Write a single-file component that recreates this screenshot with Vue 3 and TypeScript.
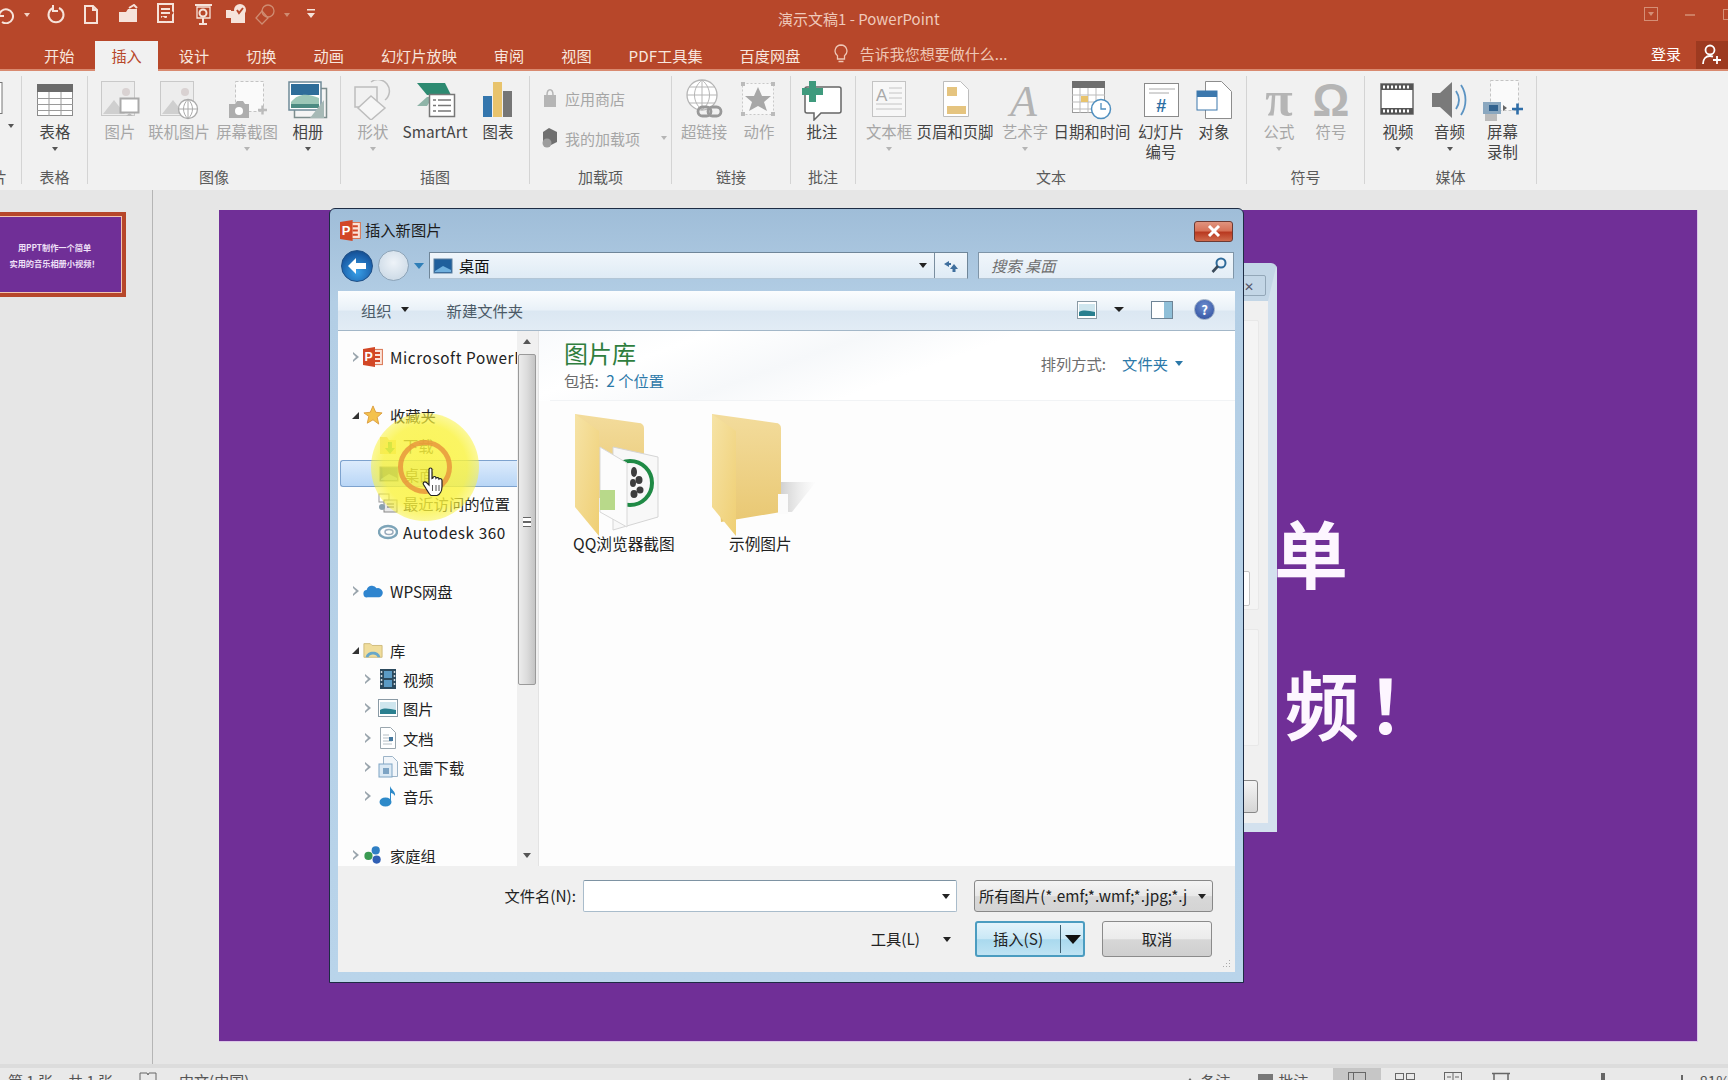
<script setup lang="ts">
const svg = (w: number, h: number, inner: string) =>
  `<svg xmlns="http://www.w3.org/2000/svg" width="${w}" height="${h}" viewBox="0 0 ${w} ${h}" style="display:block">${inner}</svg>`

// quick access toolbar
const q = 'fill="none" stroke="#f6e3da" stroke-width="2"'
const qat = [
  { w: 21, html: svg(20, 20, `<path d="M4 6v6h6M5 12a7 7 0 1 1 3 6" ${q}/>`) },
  { w: 25, html: svg(10, 20, `<path d="M2 9h6l-3 4z" fill="#f3d3c5"/>`) },
  { w: 33, html: svg(20, 20, `<path d="M7 4a7.5 7.5 0 1 0 6 0" ${q} stroke-width="3"/><path d="M7 1v6h5" ${q}/>`) },
  { w: 37, html: svg(20, 20, `<path d="M4 2h8l4 4v13H4zM12 2v4h4" ${q} stroke-width="1.5"/>`) },
  { w: 38, html: svg(22, 20, `<path d="M2 8h7l2-3h9v13H2z" fill="#f6e3da"/><path d="M12 4l5-3 3 3" ${q} stroke-width="1.5"/>`) },
  { w: 38, html: svg(20, 22, `<rect x="2" y="1" width="15" height="18" ${q} stroke-width="1.5"/><path d="M5 6h9M5 10h9M5 14h6" ${q} stroke-width="1.5"/><path d="M6 14l4 3 7-8" stroke="#b7472a" stroke-width="2" fill="none"/>`) },
  { w: 36, html: svg(22, 24, `<rect x="3" y="2" width="17" height="2" fill="#f6e3da"/><path d="M5 5h13v11H5z" fill="none" stroke="#f6e3da" stroke-width="1.3"/><circle cx="11" cy="11" r="3.5" ${q} stroke-width="1.5"/><path d="M11 16v5M7 22h8" ${q}/>`) },
  { w: 32, html: svg(24, 22, `<rect x="6" y="8" width="14" height="12" fill="#f6e3da"/><rect x="1" y="7" width="5" height="8" fill="#f6e3da"/><circle cx="15" cy="7" r="6" fill="#f6e3da"/><path d="M12 7l2 3 4-5" stroke="#b7472a" stroke-width="2" fill="none"/>`) },
  { w: 23, html: svg(22, 22, `<circle cx="14" cy="8" r="6" fill="none" stroke="#cf8c72" stroke-width="1.3"/><path d="M8 8l6 7-6 6-6-6z" fill="none" stroke="#cf8c72" stroke-width="1.3"/>`) },
  { w: 22, html: svg(10, 20, `<path d="M2 9h6l-3 4z" fill="#cf8c72"/>`) },
  { w: 26, html: svg(10, 20, `<path d="M1 5h8v1.5H1zM1 9h8l-4 5z" fill="#f6e3da"/>`) },
]

const tabs = ['开始', '插入', '设计', '切换', '动画', '幻灯片放映', '审阅', '视图', 'PDF工具集', '百度网盘']

const icons: Record<string, string> = {
  table: svg(40, 40, `<rect x="2.5" y="4.5" width="35" height="31" fill="#fff" stroke="#8a8a8a"/><rect x="2" y="4" width="36" height="8" fill="#6b6b6b"/><path d="M2 18.5h36M2 24.5h36M2 30.5h36M14 12v24M26 12v24" stroke="#9a9a9a"/>`),
  picture: svg(40, 40, `<rect x="1.5" y="1.5" width="33" height="34" fill="#ededed" stroke="#c9c9c9"/><circle cx="26" cy="12" r="4" fill="#d9d2d2"/><path d="M3 34l11-14 11 14z" fill="#cfcfcf"/><rect x="20.5" y="18.5" width="18" height="14" fill="#fff" stroke="#aaa" stroke-width="2"/><path d="M26 36h7l-3.500-3z" fill="#bbb"/>`),
  online: svg(40, 40, `<rect x="1.500" y="1.500" width="33" height="34" fill="#ededed" stroke="#c9c9c9"/><circle cx="26" cy="12" r="4" fill="#d9d2d2"/><path d="M3 34l11-14 11 14z" fill="#cfcfcf"/><circle cx="29" cy="29" r="9.500" fill="#fff" stroke="#aaa" stroke-width="1.300"/><path d="M19.500 29h19M29 19.500v19M29 19.500c-6 5-6 14 0 19M29 19.500c6 5 6 14 0 19" fill="none" stroke="#aaa"/>`),
  shot: svg(40, 40, `<rect x="8.500" y="1.500" width="28" height="30" fill="#fafafa" stroke="#c4c4c4" stroke-dasharray="3 2"/><path d="M2 24h6l2-3h6l2 3h4v14H2z" fill="#aeaeae"/><circle cx="12" cy="31" r="4" fill="#fff"/><path d="M31 30h9M35.500 25.500v9" stroke="#bbb" stroke-width="2.400"/>`),
  album: svg(40, 40, `<rect x="6.500" y="8.500" width="32" height="29" fill="#f4f4f4" stroke="#7d8d8d" stroke-width="1.500"/><rect x="1" y="2" width="32" height="28" fill="#fff" stroke="#6f8a98" stroke-width="1.500"/><path d="M3 4h28v11H3z" fill="#2e6d99"/><path d="M3 22c8-10 18-8 28-4v6H3z" fill="#9cc7b7"/><path d="M3 24h28v4H3z" fill="#4c8b82"/><path d="M22 38l14-18v18z" fill="#a6b9b6"/>`),
  shapes: svg(40, 40, `<rect x="2" y="7" width="22" height="20" fill="none" stroke="#bdbdbd" stroke-width="1.500"/><path d="M18 2a11 11 0 0 1 14 18" fill="none" stroke="#bdbdbd" stroke-width="1.500"/><path d="M18 16l14 12-14 12-13-12z" fill="#f6f6f6" stroke="#bdbdbd" stroke-width="1.500"/>`),
  smartart: svg(44, 40, `<path d="M4 3h28l6 12H14z" fill="#2d8a71"/><path d="M14 17h6l-6 9H4z" fill="#8fb4a8"/><rect x="16.500" y="14.500" width="25" height="22" fill="#fff" stroke="#777" stroke-width="1.500"/><path d="M25 20h13M25 25.500h13M25 31h13M20 20h3M20 25.500h3M20 31h3" stroke="#777" stroke-width="1.300"/>`),
  chart: svg(40, 40, `<rect x="5" y="16" width="9" height="21" fill="#3476ad"/><rect x="15" y="2" width="9" height="35" fill="#e8c36c"/><rect x="25" y="11" width="9" height="26" fill="#767676"/>`),
  store: svg(16, 20, `<path d="M2 7h12v12H2z" fill="#b5b5b5"/><path d="M5 7c0-7 6-7 6 0" fill="none" stroke="#b5b5b5" stroke-width="1.500"/>`),
  addin: svg(16, 22, `<path d="M7 1l8 4v10l-8 4-6-3V5z" fill="#6f6f6f"/><circle cx="5" cy="16" r="4.500" fill="#9d9d9d"/>`),
  link: svg(44, 44, `<circle cx="20" cy="17" r="15" fill="#fff" stroke="#b5b5b5" stroke-width="1.300"/><path d="M5 17h30M7 9h26M7 25h26M20 2v30M20 2c-10 8-10 22 0 30M20 2c10 8 10 22 0 30" fill="none" stroke="#b5b5b5"/><rect x="16" y="29" width="13" height="9" rx="4.500" fill="none" stroke="#999" stroke-width="2.800"/><rect x="26" y="29" width="13" height="9" rx="4.500" fill="none" stroke="#999" stroke-width="2.800"/>`),
  action: svg(40, 40, `<rect x="3.500" y="3.500" width="31" height="31" fill="#f7f7f7" stroke="#c9c9c9" stroke-dasharray="2 2"/><path d="M19 7l4 9h9l-7 6 3 9-9-5-9 5 3-9-7-6h9z" fill="#a7a7a7"/><path d="M2 2h4v4H2zM32 2h4v4h-4zM2 32h4v4H2zM32 32h4v4h-4z" fill="#bbb"/>`),
  comment: svg(42, 42, `<path d="M6 8h32a2 2 0 0 1 2 2v22a2 2 0 0 1-2 2H20l-7 7v-7H6a2 2 0 0 1-2-2V10a2 2 0 0 1 2-2z" fill="#fff" stroke="#666" stroke-width="1.500"/><path d="M1 9h7V2h7v7h7v7h-7v7H8v-7H1z" fill="#3f9a7d"/>`),
  textbox: svg(40, 40, `<rect x="3.500" y="1.500" width="33" height="35" fill="#f7f7f7" stroke="#c4c4c4"/><text x="7" y="21" font-size="17" fill="#a9a9a9" font-family="Liberation Sans">A</text><path d="M20 8h13M20 13h13M20 18h13M7 24h26M7 29h26" stroke="#c4c4c4"/>`),
  header: svg(40, 40, `<path d="M8.500 1.500h17l8 8v27h-25z" fill="#fff" stroke="#bdbdbd"/><rect x="12" y="7" width="10" height="9" fill="#e5c47f"/><rect x="12" y="26" width="19" height="8" fill="#e5c47f"/>`),
  wordart: svg(40, 40, `<text x="5" y="36" font-size="44" font-style="italic" fill="#b3b3b3" font-family="Liberation Serif">A</text>`),
  date: svg(44, 42, `<rect x="2.500" y="2.500" width="32" height="31" fill="#fff" stroke="#9a9a9a"/><rect x="2" y="2" width="33" height="7" fill="#6e6e6e"/><path d="M2 16h33M2 23h33M2 30h33M10 9v25M18 9v25M26 9v25" stroke="#bbb"/><rect x="11" y="17" width="7" height="6" fill="#e8c36c"/><circle cx="31" cy="30" r="9.500" fill="#fff" stroke="#4f8fbf" stroke-width="1.500"/><path d="M31 24v6h5" fill="none" stroke="#4f8fbf" stroke-width="1.300"/>`),
  number: svg(40, 40, `<rect x="3.500" y="3.500" width="34" height="33" fill="#fff" stroke="#8a8a8a"/><path d="M8 9h26M8 13h20" stroke="#aaa"/><text x="15" y="32" font-size="18" font-weight="700" font-style="italic" fill="#2d6ea3" font-family="Liberation Sans">#</text>`),
  object: svg(40, 40, `<path d="M11.500 1.500h16l10 10v27h-26z" fill="#fff" stroke="#8d8d8d"/><rect x="3" y="11" width="20" height="19" fill="#fff" stroke="#3c78ad"/><rect x="3" y="11" width="20" height="6" fill="#3c78ad"/>`),
  pi: svg(40, 44, `<text x="20" y="38" text-anchor="middle" font-size="50" font-weight="700" fill="#b5b5b5" font-family="Liberation Serif">π</text>`),
  omega: svg(40, 44, `<text x="20" y="38" text-anchor="middle" font-size="46" font-weight="700" fill="#b5b5b5" font-family="Liberation Sans">Ω</text>`),
  video: svg(40, 40, `<rect x="3" y="4" width="32" height="30" fill="#fff" stroke="#666" stroke-width="1.500"/><rect x="3" y="4" width="32" height="6" fill="#555"/><rect x="3" y="28" width="32" height="6" fill="#555"/><path d="M6 5.500v3M10 5.500v3M14 5.500v3M18 5.500v3M22 5.500v3M26 5.500v3M30 5.500v3M6 29.500v3M10 29.500v3M14 29.500v3M18 29.500v3M22 29.500v3M26 29.500v3M30 29.500v3" stroke="#fff" stroke-width="2"/>`),
  audio: svg(40, 42, `<path d="M2 14h8l12-11v36L10 28H2z" fill="#7a7a7a"/><path d="M26 12c4 6 4 12 0 18M31 6c6 9 6 21 0 30" fill="none" stroke="#5b93c2" stroke-width="1.800"/>`),
  record: svg(44, 44, `<rect x="9.500" y="2.500" width="28" height="30" fill="#fafafa" stroke="#c4c4c4" stroke-dasharray="3 2"/><rect x="2" y="24" width="18" height="12" fill="#8aa7bf"/><rect x="4" y="36" width="12" height="7" fill="#bbb"/><rect x="8" y="27" width="9" height="6" fill="#33638f"/><path d="M22 27l4 3-4 3z" fill="#666"/><path d="M31 31h11M36.500 25.500v11" stroke="#2f6ea8" stroke-width="2.600"/>`),
}

interface RibbonItem { label: string; icon: string; w: number; off?: boolean; arrow?: boolean }
interface RibbonGroup { label: string; w: number; pad: number; items: RibbonItem[] }

const groups: RibbonGroup[] = [
  { label: '表格', w: 66, pad: 8, items: [{ label: '表格', icon: 'table', w: 50, arrow: true }] },
  { label: '图像', w: 253, pad: 4, items: [
    { label: '图片', icon: 'picture', w: 56, off: true },
    { label: '联机图片', icon: 'online', w: 62, off: true },
    { label: '屏幕截图', icon: 'shot', w: 74, off: true, arrow: true },
    { label: '相册', icon: 'album', w: 48, arrow: true },
  ] },
  { label: '插图', w: 189, pad: 8, items: [
    { label: '形状', icon: 'shapes', w: 48, off: true, arrow: true },
    { label: 'SmartArt', icon: 'smartart', w: 76 },
    { label: '图表', icon: 'chart', w: 50 },
  ] },
  { label: '加载项', w: 142, pad: 0, items: [] },
  { label: '链接', w: 119, pad: 5, items: [
    { label: '超链接', icon: 'link', w: 54, off: true },
    { label: '动作', icon: 'action', w: 56, off: true },
  ] },
  { label: '批注', w: 65, pad: 6, items: [{ label: '批注', icon: 'comment', w: 50 }] },
  { label: '文本', w: 391, pad: 3, items: [
    { label: '文本框', icon: 'textbox', w: 60, off: true, arrow: true },
    { label: '页眉和页脚', icon: 'header', w: 72 },
    { label: '艺术字', icon: 'wordart', w: 68, off: true, arrow: true },
    { label: '日期和时间', icon: 'date', w: 66 },
    { label: '幻灯片\n编号', icon: 'number', w: 72 },
    { label: '对象', icon: 'object', w: 34 },
  ] },
  { label: '符号', w: 118, pad: 7, items: [
    { label: '公式', icon: 'pi', w: 50, off: true, arrow: true },
    { label: '符号', icon: 'omega', w: 54, off: true },
  ] },
  { label: '媒体', w: 172, pad: 8, items: [
    { label: '视频', icon: 'video', w: 50, arrow: true },
    { label: '音频', icon: 'audio', w: 53, arrow: true },
    { label: '屏幕\n录制', icon: 'record', w: 53 },
  ] },
]

const p3 = (s: number) => svg(s, s, `<rect x="${s * 0.45}" y="${s * 0.12}" width="${s * 0.52}" height="${s * 0.76}" fill="#fbe3d8" stroke="#d9734f"/><path d="M${s * 0.6} ${s * 0.3}h${s * 0.25}M${s * 0.6} ${s * 0.5}h${s * 0.25}M${s * 0.6} ${s * 0.7}h${s * 0.25}" stroke="#d24726" stroke-width="2"/><path d="M0 ${s * 0.1}L${s * 0.6} 0V${s}L0 ${s * 0.9}z" fill="#d24726"/><text x="${s * 0.08}" y="${s * 0.72}" font-size="${s * 0.62}" font-weight="700" fill="#fff" font-family="Liberation Sans">P</text>`)

const tree: Record<string, string> = {
  p3: p3(20),
  star: svg(22, 22, `<path d="M11 1l3 7 7 .7-5.400 4.800 1.700 7.500L11 16.300 4.700 20l1.700-7.500L1 8.700 8 8z" fill="#f4c24d" stroke="#d99b3a"/>`),
  download: svg(20, 22, `<path d="M2 3h7l2 3h7v14H2z" fill="#f0dc8c"/><path d="M10 8h4v6h3l-5 6-5-6h3z" fill="#4fae5f"/>`),
  desktop: svg(20, 20, `<rect x="1" y="3" width="18" height="14" fill="#1f5f9c" stroke="#5a7f9e"/><path d="M2 15l8-5 8 4v2H2z" fill="#6fb0de"/>`),
  recent: svg(20, 22, `<rect x="1" y="2" width="10" height="8" fill="#fff" stroke="#999"/><rect x="6" y="8" width="13" height="12" fill="#e8e8e8" stroke="#888"/><path d="M9 12h7M9 15h7" stroke="#666"/><circle cx="4" cy="15" r="3" fill="#8ba0ad"/>`),
  autodesk: svg(20, 18, `<ellipse cx="10" cy="9" rx="9" ry="6" fill="none" stroke="#7da4b8" stroke-width="2.400"/><ellipse cx="11" cy="9" rx="4" ry="2.500" fill="none" stroke="#9ab" stroke-width="1.500"/>`),
  cloud: svg(22, 18, `<path d="M5 16a4 4 0 0 1-1-8 6 6 0 0 1 11-2 5 5 0 0 1 3 10z" fill="#2f85cf"/>`),
  lib: svg(22, 20, `<path d="M1 3h7l2 2h11v13H1z" fill="#f0dd9c" stroke="#cdb877"/><path d="M3 18c1-8 15-8 16 0h-3c-1-4-9-4-10 0z" fill="#68a7c9"/>`),
  film: svg(18, 22, `<rect x="1" y="1" width="16" height="20" fill="#2c4a5e"/><rect x="5" y="3" width="8" height="7" fill="#5b9bc5"/><rect x="5" y="12" width="8" height="7" fill="#5b9bc5"/><path d="M2.500 3v16M15.500 3v16" stroke="#cfd8dd" stroke-dasharray="2 2" stroke-width="1.500"/>`),
  pic: svg(20, 18, `<rect x=".5" y=".5" width="19" height="17" fill="#fff" stroke="#8a9aa5"/><rect x="2" y="3" width="16" height="12" fill="#cfe6ee"/><path d="M2 11c5-3 10-1 16 0v4H2z" fill="#2a7f8f"/>`),
  doc: svg(16, 22, `<path d="M.5.5h10l5 5v16H.5z" fill="#fff" stroke="#9aa6ae"/><path d="M3 8h6M3 11h6M3 14h9M3 17h9" stroke="#b5bec4"/><rect x="9" y="10" width="4" height="4" fill="#44779e"/>`),
  xl: svg(20, 22, `<path d="M5.500.5h9l5 5v15h-14z" fill="#f2f6fa" stroke="#9db4c8"/><rect x="1" y="8" width="13" height="13" fill="#dbe9f4" stroke="#7ea4c4"/><rect x="5" y="12" width="6" height="6" fill="#7ea4c4"/>`),
  music: svg(18, 22, `<ellipse cx="6.500" cy="17" rx="6" ry="4.500" fill="#2e8ac9"/><path d="M11 17V1c1 4 6 5 5 10-1-2-3-3-4-3v9z" fill="#2e8ac9"/>`),
  home: svg(22, 20, `<circle cx="14" cy="5" r="4.500" fill="#2f7fc4"/><circle cx="6" cy="11" r="4.500" fill="#3a9a52"/><circle cx="15" cy="15" r="4.500" fill="#2f5fb4"/>`),
}

interface TreeRow { label?: string; icon?: string; level?: number; exp?: 'open' | 'closed'; sel?: boolean; latin?: boolean }
const rows: TreeRow[] = [
  { label: 'Microsoft PowerPoint', icon: 'p3', level: 0, exp: 'closed', latin: true },
  {},
  { label: '收藏夹', icon: 'star', level: 0, exp: 'open' },
  { label: '下载', icon: 'download', level: 1 },
  { label: '桌面', icon: 'desktop', level: 1, sel: true },
  { label: '最近访问的位置', icon: 'recent', level: 1 },
  { label: 'Autodesk 360', icon: 'autodesk', level: 1, latin: true },
  {},
  { label: 'WPS网盘', icon: 'cloud', level: 0, exp: 'closed' },
  {},
  { label: '库', icon: 'lib', level: 0, exp: 'open' },
  { label: '视频', icon: 'film', level: 1, exp: 'closed' },
  { label: '图片', icon: 'pic', level: 1, exp: 'closed' },
  { label: '文档', icon: 'doc', level: 1, exp: 'closed' },
  { label: '迅雷下载', icon: 'xl', level: 1, exp: 'closed' },
  { label: '音乐', icon: 'music', level: 1, exp: 'closed' },
  {},
  { label: '家庭组', icon: 'home', level: 0, exp: 'closed' },
]

const folderDefs = `<defs><linearGradient id="fb" x1="0" y1="0" x2="0" y2="1"><stop offset="0" stop-color="#f3dc9c"/><stop offset="1" stop-color="#e9c873"/></linearGradient><linearGradient id="ff" x1="0" y1="0" x2="1" y2="1"><stop offset="0" stop-color="#f6e3a6"/><stop offset="1" stop-color="#efcf74"/></linearGradient><linearGradient id="fs" x1="0" y1="0" x2="1" y2="0"><stop offset="0" stop-color="#aaa" stop-opacity=".55"/><stop offset="1" stop-color="#ccc" stop-opacity="0"/></linearGradient></defs>`
const plant = '<g fill="#3d3d3d"><ellipse cx="61" cy="60" rx="3" ry="5"/><ellipse cx="66" cy="68" rx="3.500" ry="4"/><ellipse cx="60" cy="71" rx="3" ry="4"/><ellipse cx="67" cy="78" rx="3.500" ry="3.500"/><ellipse cx="61" cy="82" rx="3.500" ry="4"/></g>'
const folderQQ = svg(92, 126, `${folderDefs}<path d="M2 2l64 9a5 5 0 0 1 5 5v70H10z" fill="url(#fb)"/><path d="M40 35l45 10v60l-45 13z" fill="#f8f8f8" stroke="#d5d5d5"/><circle cx="57" cy="71" r="22" fill="none" stroke="#1f8a45" stroke-width="4"/>${plant}<path d="M27 35l27 16v64l-27-15z" fill="#fcfcfc" stroke="#d8d8d8"/><rect x="27" y="78" width="15" height="20" fill="#b8d98a"/><path d="M2 2l24 17v105L2 95z" fill="url(#ff)"/>`)
const folderPlain = svg(108, 126, `${folderDefs}<path d="M70 70h36l-24 30H70z" fill="url(#fs)"/><path d="M2 2l64 9a5 5 0 0 1 5 5v84l-60 10z" fill="url(#fb)"/><rect x="68" y="82" width="10" height="20" fill="#fbfbfb"/><path d="M2 2l24 17v105L2 95z" fill="url(#ff)"/>`)

const vs = 'fill="none" stroke="#666"'
const views = [
  { id: 'normal', html: svg(18, 16, `<rect x=".5" y=".5" width="17" height="15" ${vs}/><path d="M5.500 1v14M5.500 11h12" ${vs}/>`) },
  { id: 'sorter', html: svg(20, 16, `<rect x=".5" y="1.500" width="8" height="6" ${vs}/><rect x="11.500" y="1.500" width="8" height="6" ${vs}/><rect x=".5" y="10.500" width="8" height="5" ${vs}/><rect x="11.500" y="10.500" width="8" height="5" ${vs}/>`) },
  { id: 'reading', html: svg(18, 16, `<rect x=".5" y=".5" width="17" height="15" ${vs}/><path d="M9 1v14M3 5h4M11 5h4M3 9h4M11 9h4" ${vs}/>`) },
  { id: 'show', html: svg(20, 16, `<path d="M1 1.500h18M3 2v10h14V2" ${vs} stroke-width="1.500"/>`) },
]
</script>

<template>
  <div class="app">
    <!-- title bar -->
    <div class="titlebar">
      <div class="qat">
        <span v-for="(b, i) in qat" :key="i" class="qat-cell" :style="{ width: b.w + 'px' }" v-html="b.html"></span>
      </div>
      <div class="doc-title">演示文稿1 - PowerPoint</div>
      <div class="win-btns">
        <svg width="16" height="16" viewBox="0 0 16 16"><rect x="1.500" y="1.500" width="13" height="13" fill="none" stroke="#d58f76"/><path d="M5 6h6l-3 4z" fill="#d58f76"/></svg>
        <svg width="16" height="16" viewBox="0 0 16 16"><path d="M3 9h10" stroke="#d58f76" stroke-width="1.500"/></svg>
        <svg width="16" height="16" viewBox="0 0 16 16"><rect x="2.500" y="3.500" width="11" height="10" fill="none" stroke="#d58f76"/></svg>
      </div>
    </div>

    <!-- tabs -->
    <div class="tabs">
      <span v-for="t in tabs" :key="t" class="tab" :class="{ active: t === '插入' }">{{ t }}</span>
      <span class="tell">
        <svg width="14" height="20" viewBox="0 0 14 20"><path d="M7 1a6 6 0 0 1 3.500 10.800V15h-7v-3.200A6 6 0 0 1 7 1zM4.500 17.500h5" fill="none" stroke="#eec6b5" stroke-width="1.300"/></svg>
        告诉我您想要做什么...
      </span>
      <span class="login">登录</span>
      <span class="account">
        <svg width="20" height="22" viewBox="0 0 20 22"><circle cx="8" cy="6" r="4.500" fill="none" stroke="#fff" stroke-width="1.800"/><path d="M1 20c0-5 3-8 7-8 1 0 2 .2 3 .6" fill="none" stroke="#fff" stroke-width="1.800"/><path d="M11 16h8M15 12v8" stroke="#fff" stroke-width="1.800"/></svg>
      </span>
    </div>

    <!-- ribbon -->
    <div class="ribbon">
      <div class="group first">
        <div class="first-icon">
          <svg width="6" height="32" viewBox="0 0 6 32"><rect x="-6" y=".5" width="8" height="31" fill="#fff" stroke="#777"/></svg>
          <i class="arrow first-arrow"></i>
        </div>
        <div class="group-label first-label">片</div>
      </div>
      <div v-for="g in groups" :key="g.label" class="group" :style="{ width: g.w + 'px' }">
        <div class="group-body" :style="{ paddingLeft: g.pad + 'px' }">
          <template v-if="g.label === '加载项'">
            <div class="addins">
              <div class="addin">
                <span v-html="icons.store"></span><span class="addin-text">应用商店</span>
              </div>
              <div class="addin">
                <span v-html="icons.addin"></span><span class="addin-text">我的加载项</span><i class="arrow off small"></i>
              </div>
            </div>
          </template>
          <div v-for="it in g.items" :key="it.label" class="rb-item" :class="{ off: it.off }" :style="{ width: it.w + 'px' }">
            <div class="rb-icon" v-html="icons[it.icon]"></div>
            <div class="rb-label">{{ it.label }}</div>
            <i v-if="it.arrow" class="arrow" :class="{ off: it.off }"></i>
          </div>
        </div>
        <div class="group-label">{{ g.label }}</div>
      </div>
    </div>

    <!-- workspace -->
    <div class="workspace">
      <div class="thumbs">
        <div class="thumb">
          <div class="thumb-inner">
            <p>用PPT制作一个简单</p>
            <p>实用的音乐相册小视频！</p>
          </div>
        </div>
      </div>
      <div class="stage">
        <div class="slide">
          <p class="line-one">用PPT制作一个简单</p>
          <p class="line-two">实用的音乐相册小视频！</p>
        </div>
      </div>
    </div>

    <!-- status bar -->
    <div class="status">
      <span class="st-count">第 1 张，共 1 张</span>
      <svg class="st-notes" width="18" height="16" viewBox="0 0 18 16"><path d="M1 1h7l1 2 1-2h7v13H1z" fill="none" stroke="#666"/></svg>
      <span class="st-lang">中文(中国)</span>
      <span class="st-right">
        <i class="st-up"></i><span>备注</span>
        <i class="st-square"></i><span>批注</span>
        <span class="views">
          <span v-for="v in views" :key="v.id" class="view" :class="{ on: v.id === 'normal' }" v-html="v.html"></span>
        </span>
        <span class="zoom-bar"><i class="tick big"></i><i class="tick"></i></span>
        <span class="st-zoom">81%</span>
      </span>
    </div>

    <!-- dialog left open behind the file picker -->
    <div class="back-dialog">
      <span class="back-close">✕</span>
      <div class="back-panel one"><i class="back-input"></i></div>
      <div class="back-panel two"></div>
      <div class="back-btn"></div>
    </div>

    <!-- file picker -->
    <div class="dialog">
      <div class="dlg-title">
        <span class="dlg-icon" v-html="p3(21)"></span>
        <span class="dlg-name">插入新图片</span>
        <span class="dlg-close">
          <svg width="14" height="12" viewBox="0 0 14 12"><path d="M2 1l10 10M12 1L2 11" stroke="#fff" stroke-width="3"/></svg>
        </span>
      </div>

      <div class="dlg-nav">
        <span class="nav-back">
          <svg width="20" height="18" viewBox="0 0 20 18"><path d="M9 1L1 9l8 8v-5h10V6H9z" fill="#fff"/></svg>
        </span>
        <span class="nav-forward"></span>
        <i class="nav-drop"></i>
        <div class="address">
          <span v-html="tree.desktop"></span>
          <span class="addr-text">桌面</span>
          <i class="tri addr-tri"></i>
          <span class="refresh">
            <svg width="20" height="16" viewBox="0 0 20 16"><path d="M8 3L3 6l5 3V7h2V5H8zM13 6l-4 5h2.500v3h3v-3H17z" fill="#3f6f9e"/></svg>
          </span>
        </div>
        <div class="search">
          <span>搜索 桌面</span>
          <svg width="18" height="18" viewBox="0 0 18 18"><circle cx="11" cy="7" r="4.500" fill="none" stroke="#2d6a9a" stroke-width="2"/><path d="M8 10l-5.500 6" stroke="#3a4a5a" stroke-width="2.600"/></svg>
        </div>
      </div>

      <div class="dlg-toolbar">
        <span class="tb-org">组织</span><i class="tri org-tri"></i>
        <span class="tb-new">新建文件夹</span>
        <span class="tb-right">
          <span class="tb-view" v-html="tree.pic"></span>
          <i class="tri view-tri"></i>
          <svg class="tb-pane" width="22" height="18" viewBox="0 0 22 18"><rect x=".5" y=".5" width="21" height="17" fill="#fff" stroke="#6e8496"/><rect x="13" y="1" width="8" height="16" fill="#8fbfd8"/></svg>
          <span class="tb-help">?</span>
        </span>
      </div>

      <div class="dlg-body">
        <div class="nav-tree">
          <div v-for="(r, i) in rows" :key="i" class="tree-row" :class="[r.level === 1 ? 'child' : '', { sel: r.sel, latin: r.latin }]">
            <template v-if="r.label">
              <i class="exp" :class="r.exp"></i>
              <span class="tree-icon" v-html="tree[r.icon!]"></span>
              <span class="tree-text">{{ r.label }}</span>
            </template>
          </div>
        </div>
        <div class="scroll">
          <i class="sc-up"></i>
          <div class="sc-thumb"><i class="sc-grip"></i></div>
          <i class="sc-down"></i>
        </div>
        <div class="files">
          <div class="lib-head">
            <div>
              <div class="lib-name">图片库</div>
              <div class="lib-sub">包括: <a>2 个位置</a></div>
            </div>
            <div class="lib-sort">排列方式: <a>文件夹</a><i class="tri sort-tri"></i></div>
          </div>
          <div class="file-grid">
            <div class="file-item first-file">
              <span v-html="folderQQ"></span>
              <span class="file-name">QQ浏览器截图</span>
            </div>
            <div class="file-item">
              <span v-html="folderPlain"></span>
              <span class="file-name second-name">示例图片</span>
            </div>
          </div>
        </div>
      </div>

      <div class="dlg-foot">
        <div class="foot-row">
          <label>文件名(N):</label>
          <div class="name-input"><i class="tri"></i></div>
          <div class="type-select"><span>所有图片(*.emf;*.wmf;*.jpg;*.jpeg;*.png)</span><i class="tri"></i></div>
        </div>
        <div class="foot-row second">
          <span class="tools">工具(L)</span><i class="tri tools-tri"></i>
          <div class="btn insert"><span>插入(S)</span><i class="split"></i><i class="tri big"></i></div>
          <div class="btn cancel"><span>取消</span></div>
        </div>
        <svg class="grip" width="12" height="12" viewBox="0 0 12 12"><path d="M10 2h1v1h-1zM7 5h1v1H7zM10 5h1v1h-1zM4 8h1v1H4zM7 8h1v1H7zM10 8h1v1h-1z" fill="#aaa"/></svg>
      </div>
    </div>

    <!-- presenter's cursor highlight -->
    <div class="spot"></div>
    <div class="ring"></div>
    <svg class="hand" width="24" height="30" viewBox="0 0 24 30">
      <path d="M7 2.500c0-2 3-2 3 0v9l1-.5c0-2 3-2 3 .2 1-1 3-.6 3 .8 1-.8 3-.3 3 1.500v6c0 4-2 8-5 9H9c-2-1-3-4-5-7l-2.500-4c-1-2 1-3.500 3-2L7 18z" fill="#fff" stroke="#222" stroke-width="1.200"/>
      <path d="M10.500 18v6M14 18v6M17 18v6" stroke="#555"/>
    </svg>
  </div>
</template>

<style>
html, body { margin: 0; background: #e6e6e6; overflow: hidden; }
</style>

<style scoped>
.app {
  position: relative;
  width: 1728px;
  height: 1080px;
  overflow: hidden;
  display: flex;
  flex-direction: column;
  font-family: "Noto Sans CJK SC", "Noto Sans", sans-serif;
  font-size: 15px;
  color: #333;
}
p { margin: 0; }
i { display: block; font-style: normal; }
a { color: #2b78a8; }

/* title bar */
.titlebar {
  flex: none;
  height: 38px;
  background: #b7472a;
  display: flex;
  align-items: center;
  justify-content: space-between;
  position: relative;
}
.qat { display: flex; align-items: center; margin-left: -7px; margin-top: -10px; }
.qat-cell { display: flex; justify-content: center; }
.doc-title {
  position: absolute;
  left: 778px;
  top: 9px;
  color: #efc9ba;
  font-size: 15px;
  line-height: 20px;
}
.win-btns { display: flex; gap: 23px; margin-right: -9px; margin-top: -10px; }

/* tabs */
.tabs {
  flex: none;
  height: 33px;
  box-sizing: border-box;
  background: #b7472a;
  border-bottom: 2px solid #d98a70;
  display: flex;
  align-items: stretch;
  gap: 4px;
  padding-left: 27.500px;
  color: #f7e6de;
  font-size: 15.200px;
}
.tab { padding: 0 16.500px; line-height: 29px; margin-top: 3px; white-space: nowrap; }
.tab.active { background: #f1f1f1; color: #b7472a; height: 30px; }
.tell {
  display: flex;
  align-items: center;
  gap: 12px;
  margin-left: 13px;
  color: #eec6b5;
  font-size: 15px;
  white-space: nowrap;
}
.login { margin-left: auto; line-height: 31px; font-size: 15px; color: #fff; }
.account {
  margin-left: 11px;
  width: 32px;
  margin-top: 3px;
  background: #9d3a20;
  display: flex;
  align-items: center;
  padding-left: 6px;
  box-sizing: border-box;
}

/* ribbon */
.ribbon {
  flex: none;
  height: 119px;
  box-sizing: border-box;
  padding: 5px 0 6px;
  background: #f1f1f1;
  display: flex;
  font-size: 15.400px;
}
.group {
  box-sizing: border-box;
  border-right: 1px solid #d4d4d4;
  display: flex;
  flex-direction: column;
  flex: none;
}
.group.first { width: 22px; }
.first-icon { height: 94px; padding-top: 6px; box-sizing: border-box; }
.first-arrow { margin: 34px 0 0 8px; }
.first-label { text-align: left !important; margin-left: -8px; }
.group-body { height: 94px; box-sizing: border-box; display: flex; padding-top: 4px; }
.group-label { height: 14px; line-height: 14px; text-align: center; color: #5a5a5a; font-size: 15px; }
.rb-item { flex: none; display: flex; flex-direction: column; align-items: center; color: #444; }
.rb-item.off { color: #a6a6a6; }
.rb-icon { height: 40px; display: flex; align-items: center; justify-content: center; }
.rb-label {
  margin-top: 1px;
  line-height: 20px;
  width: max-content;
  white-space: pre-line;
  text-align: center;
  font-size: 15.400px;
}
.arrow {
  margin-top: 6px;
  width: 0;
  height: 0;
  border-left: 3.500px solid transparent;
  border-right: 3.500px solid transparent;
  border-top: 4px solid #555;
}
.arrow.off { border-top-color: #b5b5b5; }
.arrow.small { margin: 0 0 0 14px; }
.addins { display: flex; flex-direction: column; gap: 18px; padding: 7px 0 0 12px; }
.addin { display: flex; align-items: center; gap: 7px; height: 22px; color: #a6a6a6; white-space: nowrap; font-size: 15px; }

/* workspace */
.workspace {
  flex: none;
  height: 878px;
  display: flex;
  background: #e6e6e6;
  border-bottom: 4px solid #dcdcdc;
  box-sizing: border-box;
}
.thumbs { flex: none; width: 153px; box-sizing: border-box; border-right: 1px solid #b5b5b5; padding-top: 22px; }
.thumb {
  width: 126px;
  height: 85px;
  box-sizing: border-box;
  border: 4px solid #b7472a;
  border-left: 0;
}
.thumb-inner {
  height: 100%;
  box-sizing: border-box;
  border: 1px solid #f3c4b0;
  border-left: 0;
  background: #702f97;
  color: #efe0f7;
  font-size: 8.200px;
  line-height: 16px;
  font-weight: 700;
  text-align: center;
  display: flex;
  flex-direction: column;
  justify-content: center;
  padding-right: 12px;
  white-space: nowrap;
}
.stage { flex: 1; padding: 20px 0 0 66px; }
.slide {
  width: 1479px;
  height: 832px;
  box-sizing: border-box;
  background: #702f97;
  border-right: 1px solid #dcc6e8;
  border-bottom: 1px solid #dcc6e8;
  color: #fdf6ff;
  display: flex;
  flex-direction: column;
  align-items: flex-end;
  justify-content: center;
  font-size: 74px;
  font-weight: 700;
  line-height: 151px;
  white-space: nowrap;
}
.line-one { padding-right: 349px; }
.line-two { padding-right: 248px; letter-spacing: 8px; }

/* status bar */
.status {
  flex: none;
  height: 24px;
  background: #e9e9e9;
  display: flex;
  align-items: center;
  color: #555;
  font-size: 15px;
  white-space: nowrap;
}
.st-count { margin-left: 8px; }
.st-notes { margin-left: 26px; }
.st-lang { margin-left: 22px; }
.st-right { margin-left: auto; display: flex; align-items: center; }
.st-up { width: 0; height: 0; border: 3.500px solid transparent; border-bottom: 4px solid #666; margin: -4px 8px 0 0; }
.st-square { width: 15px; height: 13px; background: #777; margin: 0 6px 0 27px; }
.views { display: flex; margin-left: 24px; }
.view { width: 48px; height: 24px; display: flex; align-items: center; justify-content: center; }
.view.on { background: #c6c6c6; }
.zoom-bar { display: flex; align-items: center; gap: 76px; margin-left: 76px; }
.tick { width: 2px; height: 10px; background: #666; }
.tick.big { width: 4px; height: 14px; }
.st-zoom { margin: 0 -2px 0 17px; }

/* dialog behind */
.back-dialog {
  position: absolute;
  left: 1100px;
  top: 263px;
  width: 177px;
  height: 569px;
  box-sizing: border-box;
  background: #f0f0f0;
  border: 9px solid #d3e1ee;
  border-top: 38px solid #c3d6e6;
  border-left: 0;
  border-radius: 0 6px 0 0;
}
.back-close {
  position: absolute;
  right: 2px;
  top: -26px;
  width: 40px;
  height: 21px;
  border: 1px solid #93a7b8;
  border-radius: 2px;
  text-align: left;
  padding-left: 17px;
  box-sizing: border-box;
  line-height: 20px;
  font-size: 12px;
  color: #556;
}
.back-panel { position: absolute; right: 9px; width: 100px; box-sizing: border-box; border: 1px solid #e8e8e8; background: #f4f4f4; border-radius: 2px; }
.back-panel.one { top: 19px; height: 290px; }
.back-panel.two { top: 328px; height: 117px; }
.back-input { position: absolute; right: 8px; top: 250px; width: 60px; height: 33px; border: 1px solid #c5c5c5; background: #fff; border-radius: 2px; }
.back-btn { position: absolute; right: 10px; top: 479px; width: 60px; height: 31px; border: 1px solid #888; border-radius: 3px; background: linear-gradient(#f4f4f4, #d5d5d5); }

/* file dialog */
.dialog {
  position: absolute;
  left: 329px;
  top: 208px;
  width: 915px;
  height: 775px;
  box-sizing: border-box;
  border: 1px solid #1d2c44;
  border-radius: 6px 6px 0 0;
  padding: 0 8px;
  background: linear-gradient(#9fbdd8 0, #b3cee5 12%, #b9d4ea 100%);
  display: flex;
  flex-direction: column;
  color: #222;
  font-size: 15.300px;
}
.dlg-title { flex: none; height: 43px; display: flex; align-items: center; gap: 4px; padding-left: 2px; color: #1c1c1c; }
.dlg-name { margin-top: -3px; }
.dlg-close {
  margin-left: auto;
  margin-right: 2px;
  margin-top: 1px;
  width: 39px;
  height: 21px;
  box-sizing: border-box;
  border: 1px solid #6c3a33;
  border-radius: 3px;
  background: linear-gradient(#e0947f 0, #d77359 45%, #b93a21 55%, #cf6a4c 100%);
  display: flex;
  align-items: center;
  justify-content: center;
}
.dlg-nav { flex: none; height: 27px; margin-bottom: 12px; display: flex; align-items: center; }
.nav-back {
  width: 32px;
  height: 32px;
  margin-left: 3px;
  border-radius: 50%;
  box-sizing: border-box;
  border: 1px solid #1f4f86;
  background: radial-gradient(circle at 50% 70%, #38a0e8 0, #1a5ea8 65%, #123f78 100%);
  display: flex;
  align-items: center;
  justify-content: center;
}
.nav-forward {
  width: 31px;
  height: 31px;
  margin-left: 5px;
  border-radius: 50%;
  box-sizing: border-box;
  border: 1px solid #8da4b8;
  background: radial-gradient(circle at 50% 40%, #eef3f8 0, #c4d4e2 100%);
}
.nav-drop { margin-left: 5px; width: 0; height: 0; border-left: 5px solid transparent; border-right: 5px solid transparent; border-top: 6px solid #2f7fb8; }
.address {
  margin-left: 5px;
  width: 539px;
  height: 27px;
  box-sizing: border-box;
  border: 1px solid #6f8699;
  border-bottom-color: #b3c6d6;
  background: linear-gradient(#f0f6fb, #dfebf5);
  display: flex;
  align-items: center;
  padding-left: 3px;
}
.addr-text { margin-left: 6px; color: #111; margin-top: -2px; }
.tri { width: 0; height: 0; border-left: 4px solid transparent; border-right: 4px solid transparent; border-top: 5px solid #222; }
.addr-tri { margin-left: auto; margin-right: 7px; }
.refresh { width: 32px; height: 100%; border-left: 1px solid #7a8e9f; display: flex; align-items: center; justify-content: center; }
.search {
  margin-left: 10px;
  width: 256px;
  height: 27px;
  box-sizing: border-box;
  border: 1px solid #7f95a8;
  border-bottom-color: #b3c6d6;
  background: linear-gradient(#f0f6fb, #e3edf6);
  display: flex;
  align-items: center;
  justify-content: space-between;
  padding: 0 5px 2px 12px;
  font-style: italic;
  color: #6e6e6e;
}
.dlg-toolbar {
  flex: none;
  height: 40px;
  box-sizing: border-box;
  border-bottom: 1px solid #a3b7c8;
  background: linear-gradient(#fbfdfe 0, #e9f1f8 48%, #dbe7f2 52%, #e2ecf5 100%);
  display: flex;
  align-items: center;
  color: #4b5a67;
  padding-bottom: 2px;
}
.tb-org { margin-left: 23px; }
.org-tri { margin-left: 9px; border-left-width: 4.500px; border-right-width: 4.500px; }
.tb-new { margin-left: 38px; }
.tb-right { margin-left: auto; display: flex; align-items: center; }
.view-tri { margin-left: 17px; border-left-width: 5px; border-right-width: 5px; }
.tb-pane { margin-left: 27px; }
.tb-help {
  margin: 0 20px 0 21px;
  width: 21px;
  height: 21px;
  border-radius: 50%;
  background: radial-gradient(circle at 50% 35%, #6d8fd0, #2b4a9a);
  border: 1px solid #98aac4;
  box-sizing: border-box;
  color: #fff;
  font-weight: 700;
  font-size: 13px;
  line-height: 19px;
  text-align: center;
}
.dlg-body { flex: none; height: 535px; display: flex; background: #fff; }
.nav-tree { flex: none; width: 179px; overflow: hidden; padding-top: 11px; box-sizing: border-box; background: #fdfdfd; }
.tree-row { height: 29.300px; display: flex; align-items: center; padding-left: 10px; white-space: nowrap; color: #222; box-sizing: border-box; }
.tree-row.child { padding-left: 22px; }
.tree-row.latin .tree-text { letter-spacing: .6px; }
.tree-row.sel {
  padding-left: 20px;
  margin: 1px 0 1px 2px;
  height: 27.300px;
  border: 1px solid #7da2ce;
  border-right: 0;
  border-radius: 3px 0 0 3px;
  background: linear-gradient(#dcebfc, #b9d6f6);
}
.exp { width: 14px; flex: none; height: 10px; position: relative; }
.exp.closed::before {
  content: "";
  position: absolute;
  left: 5px;
  top: 0;
  border-left: 6px solid #9aa5ad;
  border-top: 5px solid transparent;
  border-bottom: 5px solid transparent;
}
.exp.closed::after {
  content: "";
  position: absolute;
  left: 5px;
  top: 2px;
  border-left: 3.500px solid #fff;
  border-top: 3px solid transparent;
  border-bottom: 3px solid transparent;
}
.exp.open::before {
  content: "";
  position: absolute;
  left: 4px;
  top: 2px;
  border-right: 7px solid #333;
  border-top: 7px solid transparent;
}
.tree-icon { flex: none; width: 20px; display: flex; justify-content: center; margin-left: 1px; }
.tree-row.child .tree-icon { margin-left: 4px; }
.tree-text { margin-left: 7px; }
.tree-row.child .tree-text { margin-left: 5px; }
.scroll { flex: none; width: 22px; background: #f0f0f0; position: relative; border-right: 1px solid #e3e3e3; box-sizing: border-box; }
.sc-up, .sc-down { position: absolute; left: 6px; width: 0; height: 0; border-left: 4px solid transparent; border-right: 4px solid transparent; }
.sc-up { top: 8px; border-bottom: 5px solid #555; }
.sc-down { bottom: 8px; border-top: 5px solid #555; }
.sc-thumb {
  position: absolute;
  left: 1px;
  top: 23px;
  width: 18px;
  height: 331px;
  box-sizing: border-box;
  border: 1px solid #9a9a9a;
  border-radius: 2px;
  background: linear-gradient(90deg, #ececec, #dcdcdc 50%, #c4c4c4);
}
.sc-grip { position: absolute; left: 4px; top: 162px; width: 8px; height: 8px; border-top: 1px solid #666; border-bottom: 1px solid #666; background: linear-gradient(#fff 40%, #666 40%, #666 60%, #fff 60%); }
.files {
  flex: 1;
  background:
    linear-gradient(160deg, #f8fafc 0, #fff 20%, #f6f8fa 38%, #fff 55%) top / 100% 70px no-repeat,
    #fdfdfd;
  display: flex;
  flex-direction: column;
}
.lib-head {
  height: 70px;
  margin-left: 11px;
  box-sizing: border-box;
  border-bottom: 1px solid #f1f3f5;
  display: flex;
  justify-content: space-between;
  padding: 5px 52px 0 14px;
}
.lib-name { font-size: 24px; line-height: 33px; color: #2f7e3e; }
.lib-sub { margin-top: 1px; line-height: 20px; color: #6b6b6b; }
.lib-sub a { margin-left: 4px; }
.lib-sort { display: flex; align-items: center; height: 54px; color: #6e6e6e; }
.lib-sort a { margin-left: 16px; }
.sort-tri { margin-left: 7px; border-top-color: #2b78a8; border-left-width: 4.500px; border-right-width: 4.500px; }
.file-grid { display: flex; padding: 11px 0 0 34px; }
.file-item { display: flex; flex-direction: column; width: 136px; position: relative; }
.first-file { width: 137px; }
.file-name { margin-top: -4px; line-height: 20px; color: #222; white-space: nowrap; font-size: 15.700px; }
.second-name { margin-left: 19px; }
.dlg-foot {
  flex: 1;
  position: relative;
  background: #f0f0f0;
  margin-bottom: 10px;
  padding-top: 14px;
  box-sizing: border-box;
}
.foot-row { display: flex; align-items: center; justify-content: flex-end; padding-right: 22px; }
.foot-row.second { margin-top: 9px; padding-right: 23px; }
.foot-row label { margin-right: 7px; color: #222; margin-top: -2px; }
.name-input {
  width: 374px;
  height: 32px;
  box-sizing: border-box;
  border: 1px solid #a9bccb;
  border-top-color: #7e93a3;
  border-radius: 2px;
  background: #fff;
  display: flex;
  align-items: center;
  justify-content: flex-end;
  padding-right: 6px;
}
.type-select {
  margin-left: 17px;
  width: 239px;
  height: 32px;
  box-sizing: border-box;
  border: 1px solid #888;
  border-radius: 3px;
  background: linear-gradient(#f4f4f4 0, #e8e8e8 50%, #d8d8d8 52%, #d4d4d4 100%);
  display: flex;
  align-items: center;
  padding: 0 6px 0 4px;
  color: #222;
}
.type-select span { width: 209px; overflow: hidden; white-space: nowrap; margin-top: -2px; }
.type-select .tri { margin-left: auto; }
.tools { color: #222; margin-top: -3px; }
.tools-tri { margin-left: 23px; margin-right: 24px; }
.btn {
  height: 36px;
  box-sizing: border-box;
  border-radius: 3px;
  display: flex;
  align-items: center;
  justify-content: center;
  color: #222;
}
.btn span { margin-top: -3px; white-space: nowrap; }
.insert {
  width: 110px;
  border: 2px solid #4b9cc0;
  background: linear-gradient(#e3f3fb 0, #c9e8f6 50%, #a9d9ee 52%, #bfe3f3 100%);
  justify-content: flex-start;
  padding-left: 16px;
}
.split { width: 1px; height: 28px; background: #3f5f70; margin-left: auto; }
.tri.big { margin: 0 2px 0 4px; border-left-width: 8px; border-right-width: 8px; border-top-width: 9px; border-top-color: #111; }
.cancel {
  margin-left: 17px;
  width: 110px;
  border: 1px solid #8b8b8b;
  background: linear-gradient(#f4f4f4 0, #ebebeb 50%, #d7d7d7 52%, #cfcfcf 100%);
}
.grip { position: absolute; right: 4px; bottom: 2px; }

/* cursor highlight */
.spot {
  position: absolute;
  left: 371px;
  top: 413px;
  width: 108px;
  height: 108px;
  border-radius: 50%;
  background: radial-gradient(circle, rgba(250, 243, 60, .85) 0, rgba(250, 243, 60, .8) 55%, rgba(250, 243, 60, 0) 100%);
}
.ring {
  position: absolute;
  left: 398px;
  top: 440px;
  width: 54px;
  height: 54px;
  box-sizing: border-box;
  border-radius: 50%;
  border: 5px solid rgba(232, 150, 60, .85);
}
.hand { position: absolute; left: 422px; top: 467px; }
</style>
